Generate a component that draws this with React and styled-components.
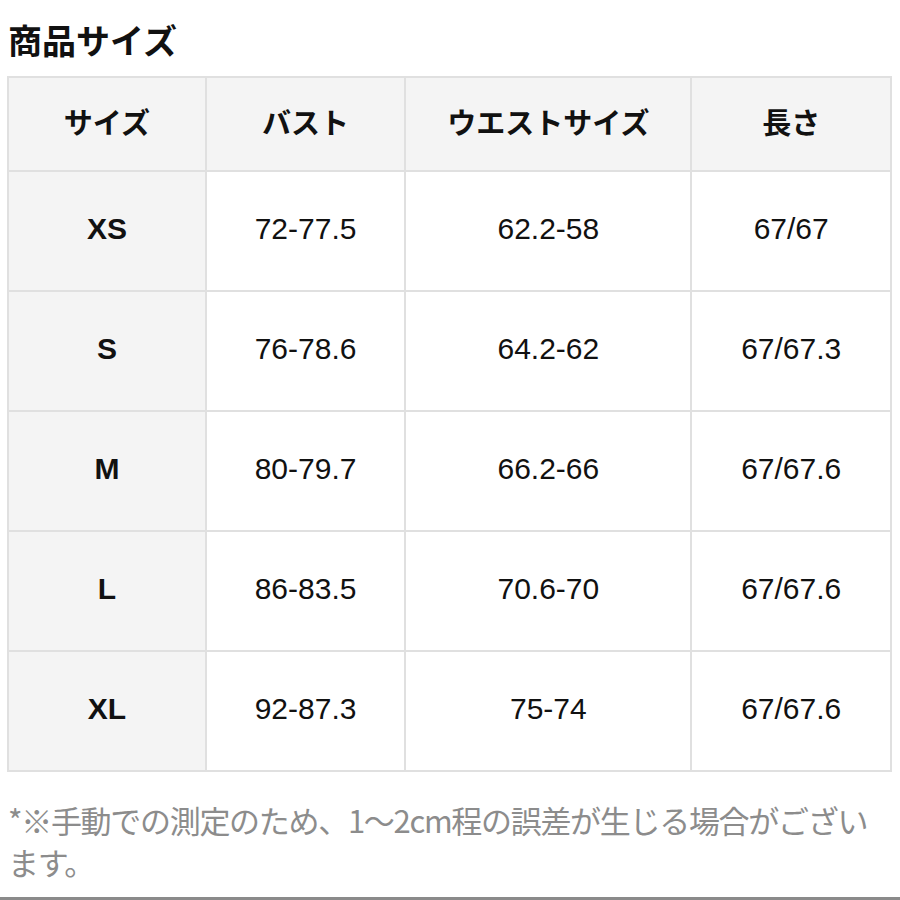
import React from "react"
import styled, { createGlobalStyle } from "styled-components"

const GlobalStyle = createGlobalStyle`
  html, body {
    margin: 0;
    padding: 0;
    background: #fff;
  }
  body {
    font-family: "Liberation Sans", "Noto Sans CJK JP", sans-serif;
    color: #111;
  }
`

const rows = [
  ["XS", "72-77.5", "62.2-58", "67/67"],
  ["S", "76-78.6", "64.2-62", "67/67.3"],
  ["M", "80-79.7", "66.2-66", "67/67.6"],
  ["L", "86-83.5", "70.6-70", "67/67.6"],
  ["XL", "92-87.3", "75-74", "67/67.6"],
]

const App = () => {
  return (
    <StPage>
      <GlobalStyle />
      <StTitle>商品サイズ</StTitle>
      <StTable>
        <colgroup>
          <col style={{ width: "22.4%" }} />
          <col style={{ width: "22.6%" }} />
          <col style={{ width: "32.4%" }} />
          <col style={{ width: "22.6%" }} />
        </colgroup>
        <thead>
          <tr>
            <StHead>サイズ</StHead>
            <StHead>バスト</StHead>
            <StHead>ウエストサイズ</StHead>
            <StHead>長さ</StHead>
          </tr>
        </thead>
        <tbody>
          {rows.map((r) => (
            <tr key={r[0]}>
              <StCell $label>{r[0]}</StCell>
              <StCell>{r[1]}</StCell>
              <StCell>{r[2]}</StCell>
              <StCell>{r[3]}</StCell>
            </tr>
          ))}
        </tbody>
      </StTable>
      <StNote>*※手動での測定のため、1〜2cm程の誤差が生じる場合がございます。</StNote>
    </StPage>
  )
}

export default App

const StPage = styled.div`
  width: 900px;
  height: 900px;
  box-sizing: border-box;
  padding: 18px 8px 0 7px;
  border-bottom: 3px solid #8a8a8a;
  overflow: hidden;
`

const StTitle = styled.h1`
  margin: 0 0 14px 1px;
  font-family: "Noto Sans CJK JP", sans-serif;
  font-size: 34px;
  font-weight: 700;
  line-height: 44px;
  color: #111;
`

const StTable = styled.table`
  width: 885px;
  border-collapse: collapse;
  table-layout: fixed;
  border: 2px solid #e0e0e0;
`

const StHead = styled.th`
  height: 86px;
  padding: 0 0 6px;
  background: #f4f4f4;
  border: 2px solid #e0e0e0;
  font-family: "Noto Sans CJK JP", sans-serif;
  font-size: 29px;
  font-weight: 700;
  color: #111;
  text-align: center;
`

const StCell = styled.td`
  height: 114px;
  padding: 0 0 4px;
  background: ${(p) => (p.$label ? "#f4f4f4" : "#fff")};
  border: 2px solid #e0e0e0;
  font-size: 30px;
  font-weight: ${(p) => (p.$label ? 700 : 400)};
  color: #111;
  text-align: center;
`

const StNote = styled.p`
  margin: 27px 0 0 1px;
  width: 880px;
  font-family: "Noto Sans CJK JP", sans-serif;
  font-size: 31px;
  line-height: 42px;
  color: #8c8c8c;
  letter-spacing: -1.3px;
`
